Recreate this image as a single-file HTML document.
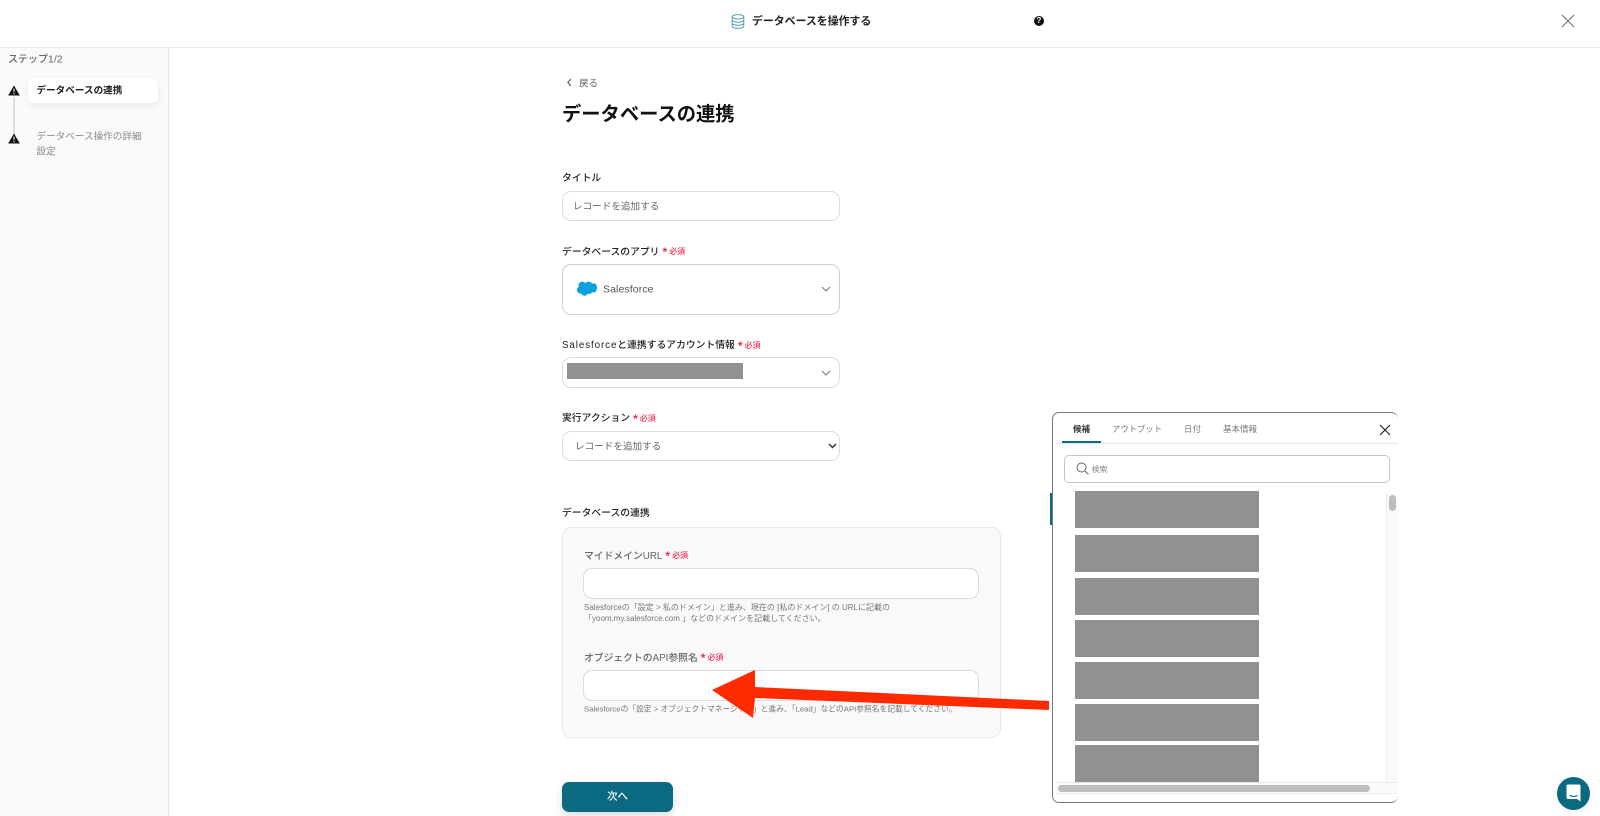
<!DOCTYPE html>
<html lang="ja"><head><meta charset="utf-8"><style>
html,body{margin:0;padding:0;background:#fff}
body{width:1600px;height:816px;position:relative;overflow:hidden;font-family:"Liberation Sans","Noto Sans CJK JP",sans-serif;color:#333}
.a{position:absolute;box-sizing:border-box}
.t{position:absolute;white-space:nowrap;transform:translateY(calc(-50% + 1px));line-height:1.2}
.l{font-size:9.800px;font-weight:500;color:#222;transform:translateY(calc(-50% + 2px))}
.r{color:#f5284f;font-size:8px;font-weight:500;margin-left:3px;position:relative;top:-.5px}
.r i{font-style:normal;font-size:12px;line-height:8px;font-weight:700;margin-right:2px;vertical-align:-2px}
.in{position:absolute;box-sizing:border-box;background:#fff;border:1px solid #d9dce4;border-radius:9px}
.g{position:absolute;background:#919191;left:1075px;width:184px}
.h{font-size:8px;color:#777}
.s{letter-spacing:.9px}
</style></head><body>
<div class="a" style="left:0;top:47px;width:1600px;height:1px;background:#e6e6e6"></div>
<div class="a" style="left:0;top:48px;width:169px;height:768px;background:#fafafa;border-right:1px solid #e6e6e6"></div>
<svg class="a" style="left:731px;top:14px" width="14" height="15" viewBox="0 0 14 15" fill="none" stroke="#5c9db0" stroke-width="1"><ellipse cx="7" cy="2.800" rx="5.800" ry="2.200"/><path d="M1.200 2.800v9.400c0 1.200 2.600 2.200 5.800 2.200s5.800-1 5.800-2.200V2.800M1.200 6c0 1.200 2.600 2.200 5.800 2.200S12.800 7.200 12.800 6M1.200 9.100c0 1.200 2.600 2.200 5.800 2.200s5.800-1 5.800-2.200"/></svg>
<div class="t" style="left:752px;top:21px;font-size:10.900px;font-weight:700;color:#222">データベースを操作する</div>
<div class="a" style="left:1034px;top:16px;width:10px;height:10px;border-radius:50%;background:#111;color:#fff;font:700 8px/10px 'Liberation Sans',sans-serif;text-align:center">?</div>
<svg class="a" style="left:1561px;top:14px" width="14" height="14" viewBox="0 0 14 14" stroke="#777" stroke-width="1.200" fill="none"><path d="M1 1l12 12M13 1L1 13"/></svg>

<div class="t" style="left:8px;top:59px;font-size:10px;font-weight:500;color:#666">ステップ<span style="font-size:10.500px">1/2</span></div>
<div class="a" style="left:28px;top:78px;width:130px;height:25px;background:#fff;border-radius:6px;box-shadow:0 3px 8px rgba(0,0,0,.07)"></div>
<div class="t" style="left:36.500px;top:89.500px;font-size:9.600px;font-weight:700;color:#222">データベースの連携</div>
<div class="a" style="left:13px;top:97px;width:1.500px;height:40px;background:#ddd"></div>
<svg class="a" style="left:7.500px;top:85px" width="12" height="11" viewBox="0 0 12 11"><path d="M6 .5L11.800 10.500H.2z" fill="#111"/><path d="M5.500 3.500h1v3.800h-1zM5.500 8h1v1.200h-1z" fill="#fff"/></svg>
<svg class="a" style="left:7.500px;top:133px" width="12" height="11" viewBox="0 0 12 11"><path d="M6 .5L11.800 10.500H.2z" fill="#111"/><path d="M5.500 3.500h1v3.800h-1zM5.500 8h1v1.200h-1z" fill="#fff"/></svg>
<div class="t" style="left:36.500px;top:136px;font-size:9.600px;color:#888">データベース操作の詳細</div>
<div class="t" style="left:36.500px;top:151px;font-size:9.600px;color:#888">設定</div>

<svg class="a" style="left:566px;top:78px" width="7" height="9" viewBox="0 0 7 9" fill="none" stroke="#555" stroke-width="1.100"><path d="M5 1L1.800 4.500 5 8"/></svg>
<div class="t" style="left:579px;top:82.500px;font-size:9.500px;color:#666">戻る</div>
<div class="t" style="left:562px;top:113.500px;font-size:19.300px;font-weight:700;color:#111">データベースの連携</div>

<div class="t l" style="left:562px;top:177px">タイトル</div>
<div class="in" style="left:562px;top:191px;width:278px;height:30px"></div>
<div class="t" style="left:573px;top:205.500px;font-size:9.600px;color:#666">レコードを追加する</div>

<div class="t l" style="left:562px;top:250.500px">データベースのアプリ<span class="r"><i>*</i>必須</span></div>
<div class="in" style="left:562px;top:264px;width:278px;height:51px;border-color:#cfcfcf"></div>
<svg class="a" style="left:577px;top:281px" width="20" height="15" viewBox="0 0 20 15"><path d="M8.200 2.300C9 1.200 10.200.6 11.500.6c1.500 0 2.800.8 3.500 2 .7-.3 1.300-.4 1.900-.4 2 0 3.100 1.900 3.100 4.500 0 2.700-1.300 4.800-3.700 4.800-.4 0-.8 0-1.200-.2-.6 1-1.700 1.700-2.900 1.700-.6 0-1.100-.1-1.500-.4-.6 1.300-1.800 2.100-3.200 2.100-1.500 0-2.700-.9-3.200-2.200-.2 0-.5.100-.7.100C1.500 12.600 0 11 0 9c0-1.300.7-2.500 1.800-3.100-.2-.5-.3-1-.3-1.500C1.500 2.200 3.300.6 5.300.6c1.200 0 2.200.7 2.900 1.700z" fill="#0ea1e0"/></svg>
<div class="t" style="left:603px;top:288.500px;font-size:10.500px;color:#555;letter-spacing:.1px">Salesforce</div>
<svg class="a" style="left:821px;top:286px" width="10" height="6" viewBox="0 0 10 6" fill="none" stroke="#777" stroke-width="1"><path d="M1 1l4 4 4-4"/></svg>

<div class="t l" style="left:562px;top:344px"><span class="s">Salesforce</span>と連携するアカウント情報<span class="r"><i>*</i>必須</span></div>
<div class="in" style="left:562px;top:357px;width:278px;height:31px"></div>
<div class="a" style="left:567px;top:363px;width:176px;height:16px;background:#919191"></div>
<svg class="a" style="left:821px;top:370px" width="10" height="6" viewBox="0 0 10 6" fill="none" stroke="#777" stroke-width="1"><path d="M1 1l4 4 4-4"/></svg>

<div class="t l" style="left:562px;top:417px">実行アクション<span class="r"><i>*</i>必須</span></div>
<div class="in" style="left:562px;top:431px;width:278px;height:30px"></div>
<div class="t" style="left:575px;top:445.500px;font-size:9.600px;color:#666">レコードを追加する</div>
<svg class="a" style="left:828px;top:443px" width="9" height="6" viewBox="0 0 9 6" fill="none" stroke="#333" stroke-width="1.500"><path d="M1 1l3.500 3.500L8 1"/></svg>

<div class="t l" style="left:562px;top:512px">データベースの連携</div>
<div class="a" style="left:562px;top:527px;width:439px;height:211px;background:#f9f9fa;border:1px solid #e8e9ee;border-radius:9px"></div>
<div class="t l" style="left:584px;top:554.500px;color:#666">マイドメインURL<span class="r"><i>*</i>必須</span></div>
<div class="in" style="left:583px;top:568px;width:396px;height:31px"></div>
<div class="t h" style="left:584px;top:606.500px">Salesforceの「設定 &gt; 私のドメイン」と進み、現在の [私のドメイン] の URLに記載の</div>
<div class="t h" style="left:584px;top:618px">「yoom.my.salesforce.com 」などのドメインを記載してください。</div>
<div class="t l" style="left:584px;top:656.500px;color:#666">オブジェクトのAPI参照名<span class="r"><i>*</i>必須</span></div>
<div class="in" style="left:583px;top:670px;width:396px;height:31px"></div>
<div class="t h" style="left:584px;top:707.500px;font-size:7.750px">Salesforceの「設定 &gt; オブジェクトマネージャー」と進み、「Lead」などのAPI参照名を記載してください。</div>
<svg class="a" style="left:700px;top:660px" width="360" height="70" viewBox="700 660 360 70"><path d="M712 690L755 670 755 687 1049 701 1049 710 755 698 753 718z" fill="#ff2a00"/></svg>

<div class="a" style="left:562px;top:782px;width:111px;height:30px;border-radius:7px;background:#0b6a82;box-shadow:0 4px 10px rgba(0,0,0,.14)"></div>
<div class="t" style="left:562px;top:795.500px;width:111px;text-align:center;font-size:10.500px;font-weight:500;color:#fff">次へ</div>

<div class="a" style="left:1050px;top:493px;width:3px;height:32px;background:#0b6a82"></div>
<div class="a" style="left:1052px;top:412px;width:346px;height:391px;background:#fff;border:1px solid #777;border-right:0;border-radius:7px;overflow:hidden"></div>
<div class="t" style="left:1073px;top:428px;font-size:8.500px;font-weight:700;color:#333">候補</div>
<div class="t" style="left:1112px;top:428.500px;font-size:8.300px;color:#777;letter-spacing:.05px">アウトプット</div>
<div class="t" style="left:1184px;top:428px;font-size:8.500px;color:#777">日付</div>
<div class="t" style="left:1223px;top:428px;font-size:8.500px;color:#777">基本情報</div>
<div class="a" style="left:1056px;top:443px;width:342px;height:1px;background:#e4e6ea"></div>
<div class="a" style="left:1062px;top:441px;width:39px;height:2px;background:#0b6a82"></div>
<svg class="a" style="left:1379px;top:424px" width="12" height="12" viewBox="0 0 12 12" stroke="#222" stroke-width="1.200" fill="none"><path d="M1 1l10 10M11 1L1 11"/></svg>
<div class="a" style="left:1064px;top:455px;width:326px;height:28px;border:1px solid #c6c6c6;border-radius:5px;background:#fff"></div>
<svg class="a" style="left:1076px;top:462px" width="13" height="13" viewBox="0 0 13 13" fill="none" stroke="#666" stroke-width="1"><circle cx="5.500" cy="5.500" r="4.500"/><path d="M9 9l3.500 3.500"/></svg>
<div class="t" style="left:1091.500px;top:469px;font-size:8px;color:#888">検索</div>
<div class="g" style="top:491px;height:37px"></div>
<div class="g" style="top:535px;height:37px"></div>
<div class="g" style="top:578px;height:37px"></div>
<div class="g" style="top:620px;height:37px"></div>
<div class="g" style="top:662px;height:37px"></div>
<div class="g" style="top:704px;height:37px"></div>
<div class="g" style="top:745px;height:37px"></div>
<div class="a" style="left:1386px;top:494px;width:12px;height:288px;background:#fafafa;border-left:1px solid #ededed"></div>
<div class="a" style="left:1389px;top:495px;width:7px;height:16px;border-radius:3.500px;background:#bdbdbd"></div>
<div class="a" style="left:1056px;top:782px;width:342px;height:12px;background:#fafafa;border-top:1px solid #e8e8e8;border-bottom:1px solid #ededed"></div>
<div class="a" style="left:1058px;top:785px;width:312px;height:7px;border-radius:3.500px;background:#bdbdbd"></div>

<div class="a" style="left:1557px;top:777px;width:33px;height:33px;border-radius:50%;background:#0b6a82;box-shadow:0 1px 8px rgba(0,0,0,.08)"></div>
<svg class="a" style="left:1566px;top:784px" width="15" height="18" viewBox="0 0 15 18"><path d="M2 .5h11a1.500 1.500 0 0 1 1.500 1.500v15.500L11 15H2a1.500 1.500 0 0 1-1.500-1.500V2A1.500 1.500 0 0 1 2 .5z" fill="#fff"/><path d="M3.500 11.500c2.500 1.200 5.500 1.200 8 0" stroke="#0b6a82" stroke-width="1" fill="none"/></svg>
</body></html>
